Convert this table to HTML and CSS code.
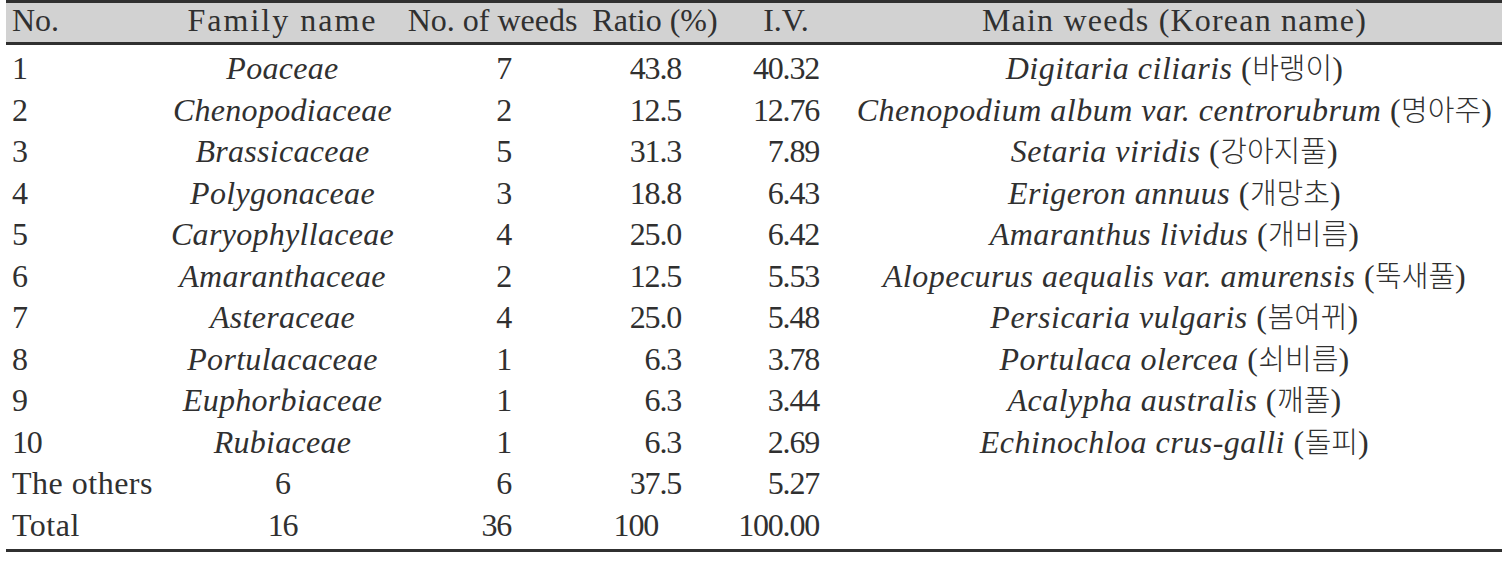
FILE: index.html
```html
<!DOCTYPE html>
<html lang="en">
<head>
<meta charset="utf-8">
<title>Weed families</title>
<link rel="stylesheet" href="styles.css">
</head>
<body>
<table class="weeds">
  <colgroup>
    <col class="c-no">
    <col class="c-family">
    <col class="c-count">
    <col class="c-ratio">
    <col class="c-iv">
    <col class="c-main">
  </colgroup>
  <thead>
    <tr>
      <th class="left">No.</th>
      <th class="wide">Family name</th>
      <th>No. of weeds</th>
      <th>Ratio (%)</th>
      <th>I.V.</th>
      <th class="wider">Main weeds (Korean name)</th>
    </tr>
  </thead>
  <tbody>
    <tr><td class="left num">1</td><td class="fam">Poaceae</td><td class="count num">7</td><td class="ratio num">43.8</td><td class="iv num">40.32</td><td class="main"><i>Digitaria ciliaris</i> (<span class="ko">바랭이</span>)</td></tr>
    <tr><td class="left num">2</td><td class="fam">Chenopodiaceae</td><td class="count num">2</td><td class="ratio num">12.5</td><td class="iv num">12.76</td><td class="main"><i>Chenopodium album var. centrorubrum</i> (<span class="ko">명아주</span>)</td></tr>
    <tr><td class="left num">3</td><td class="fam">Brassicaceae</td><td class="count num">5</td><td class="ratio num">31.3</td><td class="iv num">7.89</td><td class="main"><i>Setaria viridis</i> (<span class="ko">강아지풀</span>)</td></tr>
    <tr><td class="left num">4</td><td class="fam">Polygonaceae</td><td class="count num">3</td><td class="ratio num">18.8</td><td class="iv num">6.43</td><td class="main"><i>Erigeron annuus</i> (<span class="ko">개망초</span>)</td></tr>
    <tr><td class="left num">5</td><td class="fam">Caryophyllaceae</td><td class="count num">4</td><td class="ratio num">25.0</td><td class="iv num">6.42</td><td class="main"><i>Amaranthus lividus</i> (<span class="ko">개비름</span>)</td></tr>
    <tr><td class="left num">6</td><td class="fam">Amaranthaceae</td><td class="count num">2</td><td class="ratio num">12.5</td><td class="iv num">5.53</td><td class="main"><i>Alopecurus aequalis var. amurensis</i> (<span class="ko">뚝새풀</span>)</td></tr>
    <tr><td class="left num">7</td><td class="fam">Asteraceae</td><td class="count num">4</td><td class="ratio num">25.0</td><td class="iv num">5.48</td><td class="main"><i>Persicaria vulgaris</i> (<span class="ko">봄여뀌</span>)</td></tr>
    <tr><td class="left num">8</td><td class="fam">Portulacaceae</td><td class="count num">1</td><td class="ratio num">6.3</td><td class="iv num">3.78</td><td class="main"><i>Portulaca olercea</i> (<span class="ko">쇠비름</span>)</td></tr>
    <tr><td class="left num">9</td><td class="fam">Euphorbiaceae</td><td class="count num">1</td><td class="ratio num">6.3</td><td class="iv num">3.44</td><td class="main"><i>Acalypha australis</i> (<span class="ko">깨풀</span>)</td></tr>
    <tr><td class="left num">10</td><td class="fam">Rubiaceae</td><td class="count num">1</td><td class="ratio num">6.3</td><td class="iv num">2.69</td><td class="main"><i>Echinochloa crus-galli</i> (<span class="ko">돌피</span>)</td></tr>
    <tr><td class="left">The others</td><td class="num">6</td><td class="count num">6</td><td class="ratio num">37.5</td><td class="iv num">5.27</td><td class="main"></td></tr>
    <tr class="total"><td class="left">Total</td><td class="num">16</td><td class="count num">36</td><td class="ratio num whole">100</td><td class="iv num">100.00</td><td class="main"></td></tr>
  </tbody>
</table>
</body>
</html>
```

FILE: styles.css
```css
html, body {
  margin: 0;
  padding: 0;
  background: #ffffff;
}

body {
  font-family: "Liberation Serif", "Noto Sans CJK KR", serif;
  color: #303030;
  font-size: 32px;
  letter-spacing: 0.5px;
}

.weeds {
  margin: 0 6px;
  width: 1496px;
  border-collapse: collapse;
  table-layout: fixed;
  border-top: 3px solid #303030;
  border-bottom: 3px solid #303030;
}

.c-no { width: 159px; }
.c-family { width: 235px; }
.c-count { width: 185px; }
.c-ratio { width: 140px; }
.c-iv { width: 122px; }
.c-main { width: 655px; }

.weeds thead tr {
  background: #d2d2d2;
  border-bottom: 3px solid #303030;
}

.weeds th {
  font-weight: normal;
  height: 35px;
  padding: 0 0 4px 0;
  text-align: center;
  white-space: nowrap;
  line-height: 35px;
  letter-spacing: 0;
}

.weeds th.wide {
  letter-spacing: 2px;
}

.weeds th.wider {
  letter-spacing: 1.2px;
}

.weeds td {
  height: 35.5px;
  padding: 6px 0 0 0;
  line-height: 35.5px;
  white-space: nowrap;
  text-align: center;
}

.weeds .total td {
  padding-bottom: 5.5px;
}

.weeds .left {
  text-align: left;
  padding-left: 6px;
}

.num {
  letter-spacing: -1.2px;
}

.fam {
  font-style: italic;
  letter-spacing: 0.3px;
}

.weeds .count {
  text-align: right;
  padding-right: 74px;
}

.weeds .ratio {
  text-align: right;
  padding-right: 44px;
}

.weeds .ratio.whole {
  padding-right: 67px;
}

.weeds .iv {
  text-align: right;
  padding-right: 28px;
}

.main i {
  font-style: italic;
}

.ko {
  font-family: "Noto Sans CJK KR", sans-serif;
  font-size: 29px;
  font-weight: 300;
  line-height: 1;
  letter-spacing: 0;
}
```
